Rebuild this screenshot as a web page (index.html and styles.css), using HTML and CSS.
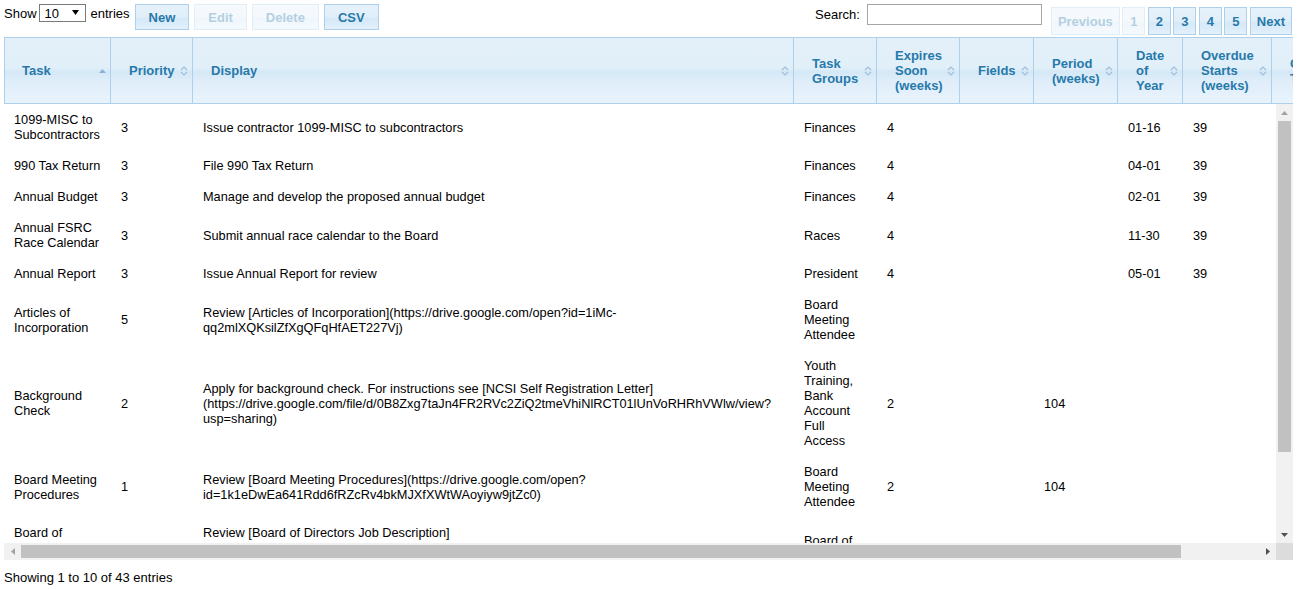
FILE: index.html
```html
<!DOCTYPE html>
<html lang="en">
<head>
<meta charset="utf-8">
<title>Tasks</title>
<link rel="stylesheet" href="styles.css">
</head>
<body>
<div class="page">
  <div class="toolbar">
    <label class="length">Show
      <span class="select-wrap">
        <select class="length-select"><option>10</option><option>25</option><option>50</option></select>
        <svg class="select-arrow" width="7" height="5" viewBox="0 0 7 5"><polygon points="0,0 7,0 3.5,5" fill="#000"/></svg>
      </span>
      entries</label>
    <div class="actions">
      <button class="btn">New</button>
      <button class="btn is-disabled">Edit</button>
      <button class="btn is-disabled">Delete</button>
      <button class="btn">CSV</button>
    </div>
    <div class="spacer"></div>
    <label class="search">Search: <input class="search-input" type="search"></label>
    <div class="paginate">
      <a class="btn page-btn is-disabled">Previous</a>
      <a class="btn page-btn is-disabled">1</a>
      <a class="btn page-btn">2</a>
      <a class="btn page-btn">3</a>
      <a class="btn page-btn">4</a>
      <a class="btn page-btn">5</a>
      <a class="btn page-btn">Next</a>
    </div>
  </div>

  <div class="scroller">
    <div class="scroll-head">
      <table class="grid grid-head">
        <colgroup>
          <col class="c-task"><col class="c-prio"><col class="c-disp"><col class="c-groups"><col class="c-exp"><col class="c-fields"><col class="c-period"><col class="c-date"><col class="c-over"><col class="c-extra">
        </colgroup>
        <thead>
          <tr>
            <th>Task<span class="sort"><svg width="7" height="4" viewBox="0 0 7 4"><polygon points="0,4 3.5,0 7,4" fill="#8db4d6"/></svg></span></th>
            <th>Priority<span class="sort"><svg width="8" height="11" viewBox="0 0 8 11"><path d="M1 4.5L4 1.5L7 4.5M1 6.5L4 9.5L7 6.5" fill="none" stroke="#9dbfdc" stroke-width="1.2"/></svg></span></th>
            <th>Display<span class="sort"><svg width="8" height="11" viewBox="0 0 8 11"><path d="M1 4.5L4 1.5L7 4.5M1 6.5L4 9.5L7 6.5" fill="none" stroke="#9dbfdc" stroke-width="1.2"/></svg></span></th>
            <th>Task Groups<span class="sort"><svg width="8" height="11" viewBox="0 0 8 11"><path d="M1 4.5L4 1.5L7 4.5M1 6.5L4 9.5L7 6.5" fill="none" stroke="#9dbfdc" stroke-width="1.2"/></svg></span></th>
            <th>Expires Soon (weeks)<span class="sort"><svg width="8" height="11" viewBox="0 0 8 11"><path d="M1 4.5L4 1.5L7 4.5M1 6.5L4 9.5L7 6.5" fill="none" stroke="#9dbfdc" stroke-width="1.2"/></svg></span></th>
            <th>Fields<span class="sort"><svg width="8" height="11" viewBox="0 0 8 11"><path d="M1 4.5L4 1.5L7 4.5M1 6.5L4 9.5L7 6.5" fill="none" stroke="#9dbfdc" stroke-width="1.2"/></svg></span></th>
            <th>Period (weeks)<span class="sort"><svg width="8" height="11" viewBox="0 0 8 11"><path d="M1 4.5L4 1.5L7 4.5M1 6.5L4 9.5L7 6.5" fill="none" stroke="#9dbfdc" stroke-width="1.2"/></svg></span></th>
            <th>Date of Year<span class="sort"><svg width="8" height="11" viewBox="0 0 8 11"><path d="M1 4.5L4 1.5L7 4.5M1 6.5L4 9.5L7 6.5" fill="none" stroke="#9dbfdc" stroke-width="1.2"/></svg></span></th>
            <th>Overdue Starts (weeks)<span class="sort"><svg width="8" height="11" viewBox="0 0 8 11"><path d="M1 4.5L4 1.5L7 4.5M1 6.5L4 9.5L7 6.5" fill="none" stroke="#9dbfdc" stroke-width="1.2"/></svg></span></th>
            <th>Created Time<span class="sort"><svg width="8" height="11" viewBox="0 0 8 11"><path d="M1 4.5L4 1.5L7 4.5M1 6.5L4 9.5L7 6.5" fill="none" stroke="#9dbfdc" stroke-width="1.2"/></svg></span></th>
          </tr>
        </thead>
      </table>
    </div>

    <div class="scroll-body">
      <div class="viewport">
        <table class="grid grid-body">
          <colgroup>
            <col class="c-task"><col class="c-prio"><col class="c-disp"><col class="c-groups"><col class="c-exp"><col class="c-fields"><col class="c-period"><col class="c-date"><col class="c-over"><col class="c-extra">
          </colgroup>
          <tbody>
            <tr><td>1099-MISC to Subcontractors</td><td>3</td><td>Issue contractor 1099-MISC to subcontractors</td><td>Finances</td><td>4</td><td></td><td></td><td>01-16</td><td>39</td><td></td></tr>
            <tr><td>990 Tax Return</td><td>3</td><td>File 990 Tax Return</td><td>Finances</td><td>4</td><td></td><td></td><td>04-01</td><td>39</td><td></td></tr>
            <tr><td>Annual Budget</td><td>3</td><td>Manage and develop the proposed annual budget</td><td>Finances</td><td>4</td><td></td><td></td><td>02-01</td><td>39</td><td></td></tr>
            <tr><td>Annual FSRC Race Calendar</td><td>3</td><td>Submit annual race calendar to the Board</td><td>Races</td><td>4</td><td></td><td></td><td>11-30</td><td>39</td><td></td></tr>
            <tr><td>Annual Report</td><td>3</td><td>Issue Annual Report for review</td><td>President</td><td>4</td><td></td><td></td><td>05-01</td><td>39</td><td></td></tr>
            <tr><td>Articles of Incorporation</td><td>5</td><td>Review [Articles of Incorporation](https://drive.google.com/open?id=1iMc-qq2mlXQKsilZfXgQFqHfAET227Vj)</td><td>Board Meeting Attendee</td><td></td><td></td><td></td><td></td><td></td><td></td></tr>
            <tr><td>Background Check</td><td>2</td><td>Apply for background check. For instructions see [NCSI Self Registration Letter](https://drive.google.com/file/d/0B8Zxg7taJn4FR2RVc2ZiQ2tmeVhiNlRCT01lUnVoRHRhVWlw/view?usp=sharing)</td><td>Youth Training, Bank Account Full Access</td><td>2</td><td></td><td>104</td><td></td><td></td><td></td></tr>
            <tr><td>Board Meeting Procedures</td><td>1</td><td>Review [Board Meeting Procedures](https://drive.google.com/open?id=1k1eDwEa641Rdd6fRZcRv4bkMJXfXWtWAoyiyw9jtZc0)</td><td>Board Meeting Attendee</td><td>2</td><td></td><td>104</td><td></td><td></td><td></td></tr>
            <tr><td>Board of Directors Job Description</td><td>3</td><td>Review [Board of Directors Job Description](https://drive.google.com/file/d/0B7ZZ5bVKHJxbO2YVD2YkdWFFTNnZWRBdGZ3Y1pkdzljTmcW/view?usp=sharing)</td><td>Board of Directors</td><td>2</td><td></td><td>104</td><td></td><td></td><td></td></tr>
            <tr><td>Board of Directors Meeting</td><td>2</td><td>Attend the monthly Board of Directors meeting</td><td>Board Meeting Attendee</td><td>1</td><td></td><td>4</td><td></td><td></td><td></td></tr>
          </tbody>
        </table>
      </div>
      <div class="vbar">
        <div class="sb-btn"><svg width="7" height="4" viewBox="0 0 7 4"><polygon points="0,4 3.5,0 7,4" fill="#a3a3a3"/></svg></div>
        <div class="vtrack"><div class="vthumb"></div></div>
        <div class="sb-btn"><svg width="7" height="4" viewBox="0 0 7 4"><polygon points="0,0 7,0 3.5,4" fill="#505050"/></svg></div>
      </div>
      <div class="hbar">
        <div class="sb-btn"><svg width="4" height="7" viewBox="0 0 4 7"><polygon points="4,0 4,7 0,3.5" fill="#a3a3a3"/></svg></div>
        <div class="htrack"><div class="hthumb"></div></div>
        <div class="sb-btn"><svg width="4" height="7" viewBox="0 0 4 7"><polygon points="0,0 0,7 4,3.5" fill="#505050"/></svg></div>
      </div>
      <div class="corner"></div>
    </div>
  </div>

  <div class="info">Showing 1 to 10 of 43 entries</div>
</div>
</body>
</html>
```

FILE: styles.css
```css
* { box-sizing: border-box; }

body {
  margin: 0;
  font-family: "Liberation Sans", Arial, sans-serif;
  font-size: 13px;
  color: #000;
  background: #fff;
}

.page { padding: 4px 4px 0 4px; }

/* ---------- toolbar ---------- */
.toolbar {
  display: flex;
  align-items: flex-start;
  height: 33px;
}

.length {
  display: flex;
  align-items: center;
  height: 18px;
  line-height: 15px;
  white-space: nowrap;
}

.select-wrap {
  position: relative;
  display: inline-block;
  margin: 0 5px 0 2px;
  height: 18px;
}

.length-select {
  appearance: none;
  -webkit-appearance: none;
  display: block;
  width: 47px;
  height: 18px;
  border: 1px solid #7a7a7a;
  border-radius: 0;
  background: #fff;
  color: #000;
  font-family: "Liberation Sans", Arial, sans-serif;
  font-size: 13px;
  padding: 0 0 0 5px;
  margin: 0;
}

.select-arrow {
  position: absolute;
  right: 7px;
  top: 6px;
  pointer-events: none;
}

.actions {
  display: flex;
  gap: 5px;
  margin-left: 5px;
}

.btn {
  display: flex;
  align-items: center;
  justify-content: center;
  height: 26px;
  padding: 0 13px;
  border: 1px solid #aed0ea;
  border-radius: 0;
  background: linear-gradient(to bottom, #e5f1fb 0%, #e2eff9 48%, #d6e9f7 56%, #dbecf9 80%, #e3f0fa 100%);
  color: #2779aa;
  font-family: "Liberation Sans", Arial, sans-serif;
  font-size: 13px;
  font-weight: bold;
  line-height: 15px;
  margin: 0;
  cursor: pointer;
}

.btn.is-disabled { opacity: 0.35; cursor: default; }

.spacer { flex: 1; }

.search {
  display: flex;
  align-items: center;
  gap: 7px;
  height: 21px;
  margin-right: 9px;
  white-space: nowrap;
}

.search-input {
  width: 175px;
  height: 21px;
  border: 1px solid #a6a6a6;
  border-radius: 0;
  padding: 0 3px;
  margin: 0;
  font-family: "Liberation Sans", Arial, sans-serif;
  font-size: 13px;
}

.paginate {
  display: flex;
  gap: 2.5px;
  margin-top: 3px;
  margin-right: 1px;
}

.page-btn {
  height: 28px;
  min-width: 23px;
  padding: 0 6px;
}

/* ---------- table ---------- */
.grid {
  border-collapse: separate;
  border-spacing: 0;
  table-layout: fixed;
  width: 1360px;
}

.c-task { width: 107px; }
.c-prio { width: 82px; }
.c-disp { width: 601px; }
.c-groups { width: 83px; }
.c-exp { width: 83px; }
.c-fields { width: 74px; }
.c-period { width: 84px; }
.c-date { width: 65px; }
.c-over { width: 89px; }
.c-extra { width: 92px; }

.scroll-head {
  overflow: hidden;
  width: 100%;
}

.grid-head th {
  position: relative;
  padding: 10px 18px;
  border-top: 1px solid #aed0ea;
  border-bottom: 1px solid #aed0ea;
  border-right: 1px solid #aed0ea;
  background: linear-gradient(to bottom, #e3f0fa 0%, #e1eff9 46%, #d5e8f6 52%, #e0eefa 68%, #e8f3fc 100%);
  color: #2779aa;
  font-size: 13px;
  font-weight: bold;
  line-height: 15px;
  text-align: left;
  vertical-align: middle;
}

.grid-head th:first-child {
  border-left: 1px solid #aed0ea;
  padding-left: 17px;
}

.sort {
  position: absolute;
  right: 4px;
  top: 50%;
  transform: translateY(-50%);
  display: flex;
}

.scroll-body {
  display: grid;
  grid-template-columns: 1fr 17px;
  grid-template-rows: 439px 17px;
}

.viewport { overflow: hidden; }

.grid-body td {
  padding: 8px 10px;
  font-size: 12.75px;
  line-height: 15px;
  vertical-align: middle;
  color: #000;
}

/* ---------- fake scrollbars ---------- */
.vbar {
  display: flex;
  flex-direction: column;
  background: #f1f1f1;
}

.hbar {
  display: flex;
  background: #f1f1f1;
}

.sb-btn {
  flex: 0 0 17px;
  height: 17px;
  width: 17px;
  display: flex;
  align-items: center;
  justify-content: center;
}

.vtrack { flex: 1; }
.vthumb {
  margin: 0 2px;
  height: 331px;
  background: #c1c1c1;
}

.htrack { flex: 1; display: flex; align-items: stretch; }
.hthumb {
  margin: 2px 0;
  width: 1160px;
  background: #c1c1c1;
}

.corner { background: #dcdcdc; }

.info {
  margin-top: 10px;
  line-height: 15px;
  font-size: 13px;
}
```
